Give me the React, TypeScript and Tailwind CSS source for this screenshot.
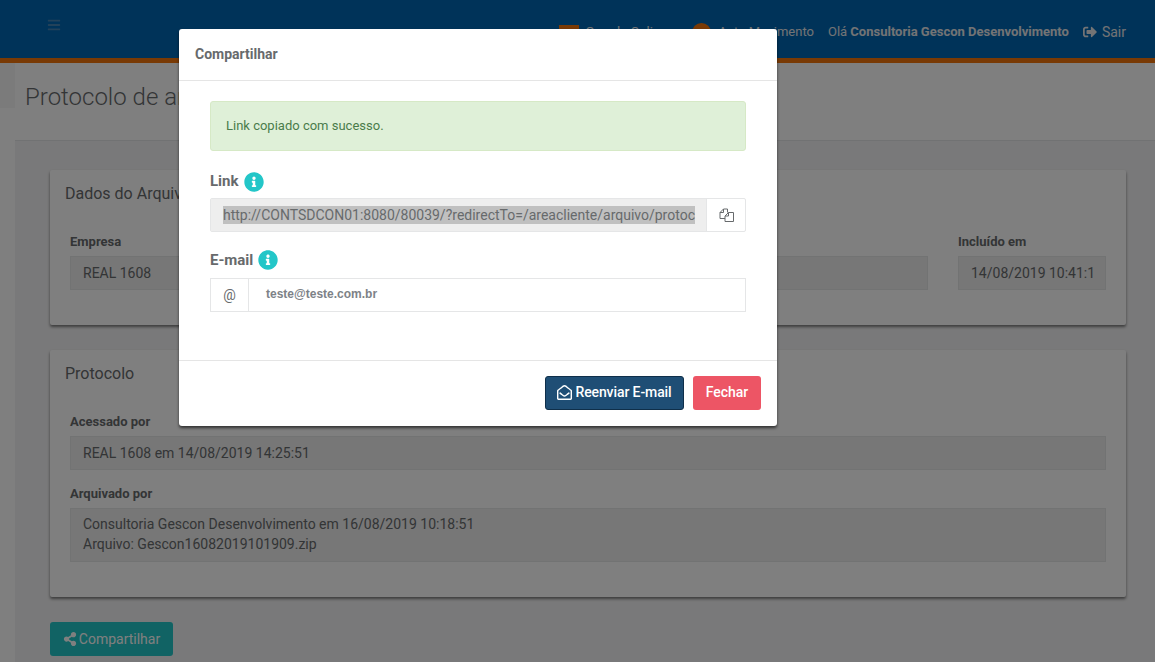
import { FaBars, FaInfoCircle, FaRegEnvelopeOpen, FaShareAlt, FaSignOutAlt } from 'react-icons/fa';

function ReadOnlyField({ label, className = '', children }: { label: string; className?: string; children: React.ReactNode }) {
  return (
    <div className={className}>
      <label className="block text-[13px] leading-[18px] font-bold text-[#676a6c] mb-[5px]">{label}</label>
      <div className="bg-[#eeeeee] border border-[#e5e6e7] px-3 py-[6px] text-[14px] leading-[20px] text-[#676a6c] overflow-hidden whitespace-nowrap">
        {children}
      </div>
    </div>
  );
}

function Card({ title, children }: { title: string; children: React.ReactNode }) {
  return (
    <section className="bg-white rounded-[2px] shadow-[0_2px_3px_rgba(0,0,0,0.5)] px-5 pb-[35px] mb-[25px]">
      <h2 className="text-[16px] leading-[48px] h-[63px] -mx-[5px] text-[#676a6c] font-normal">{title}</h2>
      {children}
    </section>
  );
}

function InfoIcon() {
  return <FaInfoCircle className="text-[#23c6c8] text-[20px]" />;
}

function FilesIcon() {
  return (
    <svg width="15" height="14" viewBox="0 0 15 14" fill="none" stroke="currentColor" strokeWidth="1">
      <path d="M8.5 4.5V1H4.5L1 4.5V10.5H6" />
      <path d="M4.5 1V4.5H1" />
      <path d="M9.5 4.5H14.5V13.5H6V8L9.5 4.5Z" />
      <path d="M9.5 4.5V8H6" />
    </svg>
  );
}

export default function App() {
  return (
    <div className="relative h-[662px] w-[1155px] overflow-hidden bg-white font-['Roboto',sans-serif]">
      <header className="h-[63px] bg-[#0066b3] border-b-[5px] border-[#f2750a] flex items-center text-[#e6e8ea] text-[13px] pt-[6px]">
        <FaBars className="ml-[47px] -mt-[14px] text-[14px] text-[#8ba3b8] opacity-50" />
        <div className="ml-auto flex items-center pr-[29px]">
          <span className="w-[20px] h-[14px] bg-[#f2750a] mr-[6px]" />
          <span className="mr-[26px] w-[81px] whitespace-nowrap">Guarda Online</span>
          <span className="w-[19px] h-[19px] rounded-full bg-[#f2750a] mr-[7px]" />
          <span className="mr-[14px] whitespace-nowrap">Auto Movimento</span>
          <span className="whitespace-nowrap">
            Olá <strong className="font-bold">Consultoria Gescon Desenvolvimento</strong>
          </span>
          <span className="ml-[14px] flex items-center gap-[5px] text-[14px]">
            <FaSignOutAlt className="text-[14px]" /> Sair
          </span>
        </div>
      </header>

      <div className="h-[45px] pl-[25px] relative">
        <div className="absolute left-0 top-0 w-[15px] h-[45px] bg-[#f6f6f6]" />
        <h1 className="text-[24px] leading-[68px] font-light text-[#676a6c]">Protocolo de arquivo</h1>
      </div>

      <main className="mt-[32px] ml-[15px] h-[600px] bg-[#f3f3f4] border-t border-[#e2e4e6] pl-[35px] pr-[29px] pt-[29px]">
        <Card title="Dados do Arquivo">
          <div className="flex justify-between">
            <ReadOnlyField label="Empresa" className="w-[858px]">
              REAL 1608
            </ReadOnlyField>
            <ReadOnlyField label="Incluído em" className="w-[148px]">
              14/08/2019 10:41:1
            </ReadOnlyField>
          </div>
        </Card>
        <Card title="Protocolo">
          <ReadOnlyField label="Acessado por" className="mb-[15px]">
            REAL 1608 em 14/08/2019 14:25:51
          </ReadOnlyField>
          <ReadOnlyField label="Arquivado por">
            <div className="-mt-[1px] mb-[1px]">
              <div>Consultoria Gescon Desenvolvimento em 16/08/2019 10:18:51</div>
              <div>Arquivo: Gescon16082019101909.zip</div>
            </div>
          </ReadOnlyField>
        </Card>
        <button className="h-[34px] w-[123px] rounded-[3px] bg-[#23c6c8] text-white text-[14px] flex items-center justify-center gap-[2px]">
          <FaShareAlt className="text-[14px]" /> Compartilhar
        </button>
      </main>

      <div className="absolute inset-0 bg-black/50" />

      <div className="absolute left-[179px] top-[29px] w-[598px] h-[397px] bg-white rounded-[3px] shadow-[0_2px_3px_rgba(0,0,0,0.6)] flex flex-col">
        <div className="h-[52px] border-b border-[#e5e5e5] px-4 flex items-center">
          <h3 className="text-[14px] font-bold text-[#676a6c]">Compartilhar</h3>
        </div>
        <div className="flex-1 px-[31px] pt-[20px]">
          <div className="h-[50px] rounded-[3px] bg-[#dff0d8] border border-[#d6e9c6] text-[#4a7c4b] text-[13px] flex items-center px-[15px]">
            Link copiado com sucesso.
          </div>
          <div className="mt-[19px] flex items-center gap-[5px] h-[22px] pt-[1px]">
            <label className="text-[15px] font-bold text-[#676a6c]">Link</label>
            <InfoIcon />
          </div>
          <div className="mt-[6px] flex h-[34px] border border-[#e5e6e7] rounded-[2px]">
            <div className="flex-1 min-w-0 bg-[#eeeeee] pl-3 flex items-center border-r border-[#e5e6e7]">
              <span className="bg-[#c0c0c0] text-[14px] leading-[18px] whitespace-nowrap text-[#676a6c]">
                http://CONTSDCON01:8080/80039/?redirectTo=/areacliente/arquivo/protoc
              </span>
            </div>
            <div className="w-[38px] flex items-center justify-center text-[#676a6c]">
              <FilesIcon />
            </div>
          </div>
          <div className="mt-[17px] flex items-center gap-[5px] h-[22px]">
            <label className="text-[15px] font-bold text-[#676a6c]">E-mail</label>
            <InfoIcon />
          </div>
          <div className="mt-[7px] flex h-[34px] border border-[#e5e6e7]">
            <div className="w-[38px] border-r border-[#e5e6e7] flex items-center justify-center text-[14px] text-[#676a6c]">@</div>
            <div className="flex-1 flex items-center pl-[17px] pb-[2px] text-[12px] font-['Liberation_Sans',sans-serif] font-bold text-[#7d8287]">
              teste@teste.com.br
            </div>
          </div>
        </div>
        <div className="h-[66px] border-t border-[#e5e5e5] flex items-center justify-end gap-[9px] pr-[16px] pb-[1px]">
          <button className="h-[34px] w-[139px] pb-[1px] rounded-[3px] bg-[#1f4e75] border border-[#0f2f4a] text-white text-[14px] font-medium tracking-[-0.1px] flex items-center justify-center gap-[3px]">
            <FaRegEnvelopeOpen className="text-[15px]" /> Reenviar E-mail
          </button>
          <button className="h-[34px] w-[68px] pb-[1px] rounded-[3px] bg-[#ed5565] text-white text-[14px] font-medium">Fechar</button>
        </div>
      </div>
    </div>
  );
}
